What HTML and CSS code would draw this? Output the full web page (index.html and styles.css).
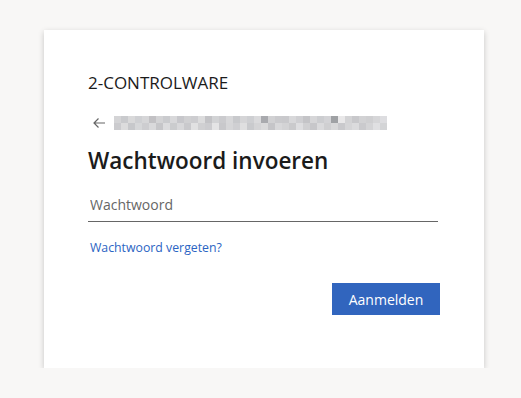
FILE: index.html
```html
<!DOCTYPE html>
<html lang="nl">
<head>
    <meta charset="UTF-8">
    <meta name="viewport" content="width=device-width, initial-scale=1.0">
    <title>Aanmelden</title>
    <link rel="stylesheet" href="styles.css">
</head>
<body>
    <div class="login-card">
        <div class="brand">2-CONTROLWARE</div>
        <div class="identity">
            <svg class="back-arrow" width="14" height="12" viewBox="0 0 14 12">
                <path d="M13 6H2M6.5 1.5L2 6l4.5 4.5" fill="none" stroke="#666" stroke-width="1.2"/>
            </svg>
            <div class="masked-email" id="masked-email">
                <!-- pixelated account name is filled in below -->
            </div>
        </div>
        <h1>Wachtwoord invoeren</h1>
        <form class="login-form" onsubmit="return false">
            <input type="password" class="password-input" placeholder="Wachtwoord">
            <a href="#" class="forgot-link">Wachtwoord vergeten?</a>
            <div class="actions">
                <button type="submit" class="primary-btn">Aanmelden</button>
            </div>
        </form>
    </div>
    <script>
        // two rows of blurred pixels standing in for the e-mail address
        const shades = [
            ['#d4d4d6','#c9cacd','#d9d9da','#cfd0d3','#d6d6d8','#c2c1c4','#d3d3d5','#cacbce','#d8d8da','#c7c7cb','#d0d0d2','#cdcdd0','#dcdcdd','#c3c3c6','#d2d3d5','#cbcbce','#d7d7d9','#c8c9cc','#d5d5d7','#cecfd2','#dadadc','#a9aaae','#d1d1d3','#cacacd','#c9c9cc','#d8d8da','#cfcfd2','#c4c4c7','#d6d6d8','#cccdd0','#d3d3d6','#9fa1a4','#e9e8e9','#d3d3d5','#c8c8cb','#d2d2d4','#cfcfd1','#d6d6d8','#dddde0'],
            ['#cbcbce','#dcdcdd','#c7c8cb','#d6d7d9','#cdcdd0','#d9d9db','#c6c6c9','#dcdcde','#cbccce','#d8d8da','#c9c9cc','#e1e1e2','#d0d0d2','#cccccf','#e4e4e5','#c8c8cb','#d6d6d8','#cfcfd2','#dfdfe0','#c9cacd','#d4d4d6','#dadadb','#c5c5c8','#d8d8da','#d3d3d5','#cacacc','#dedee0','#d0d0d2','#c7c7ca','#dadadc','#cfcfd1','#d8d8d9','#c9c9cc','#d5d5d7','#dbdbdd','#cacacd','#d4d4d6','#e0e0e2','#d3d4d6']
        ];
        const masked = document.getElementById('masked-email');
        shades.forEach(row => {
            row.forEach(color => {
                const cell = document.createElement('span');
                cell.className = 'pixel';
                cell.style.backgroundColor = color;
                masked.appendChild(cell);
            });
        });
    </script>
</body>
</html>
```

FILE: styles.css
```css
body {
    font-family: 'Segoe UI', 'Open Sans', 'Noto Sans', sans-serif;
    background-color: #f8f7f6;
    margin: 0;
    color: #1b1b1b;
}
.login-card {
    width: 440px;
    height: 338px;
    box-sizing: border-box;
    margin: 30px 0 0 44px;
    padding: 41px 44px 44px 44px;
    background-color: #fff;
    box-shadow: 0 2px 6px rgba(0, 0, 0, 0.2);
}
.brand {
    height: 24px;
    line-height: 24px;
    font-size: 17px;
    color: #1b1b1b;
}
.identity {
    display: flex;
    align-items: center;
    margin-top: 21px;
    height: 14px;
}
.back-arrow {
    margin-left: 4px;
    margin-right: 8px;
}
.masked-email {
    display: grid;
    grid-template-columns: repeat(39, 7px);
    grid-auto-rows: 7px;
}
.pixel {
    display: block;
}
h1 {
    margin: 15px 0 0 0;
    font-size: 22.5px;
    font-weight: 600;
    line-height: 32px;
    color: #1b1b1b;
}
.login-form {
    display: flex;
    flex-direction: column;
    margin-top: 13px;
}
.password-input {
    width: 350px;
    height: 32px;
    box-sizing: border-box;
    padding: 4px 2px 7px 2px;
    border: none;
    border-bottom: 1px solid #666;
    font-family: inherit;
    font-size: 14px;
    outline: none;
    background: transparent;
}
.password-input::placeholder {
    color: #666;
}
.forgot-link {
    margin: 17px 0 0 2px;
    font-size: 12.3px;
    line-height: 18px;
    color: #2b64c3;
    text-decoration: none;
    align-self: flex-start;
}
.actions {
    display: flex;
    justify-content: flex-end;
    margin-top: 26px;
}
.primary-btn {
    width: 108px;
    height: 32px;
    border: none;
    background-color: #3165be;
    color: #fff;
    font-family: inherit;
    font-size: 14px;
    cursor: pointer;
}
```
